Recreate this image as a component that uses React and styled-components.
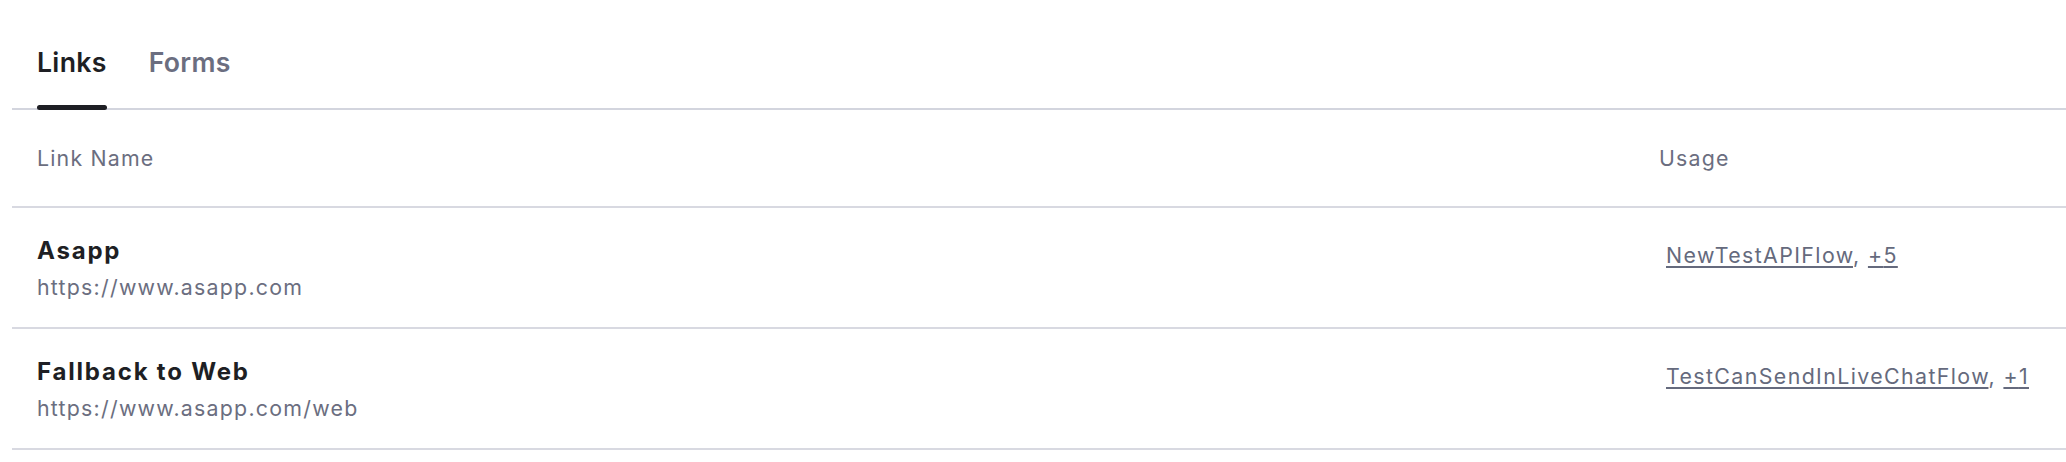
import React, { useState } from "react";
import styled, { createGlobalStyle } from "styled-components";

const GlobalStyle = createGlobalStyle`
  html, body {
    margin: 0;
    padding: 0;
    background: #ffffff;
  }
  body {
    font-family: Inter, "Noto Sans", "Liberation Sans", sans-serif;
    color: #1e1f24;
    -webkit-font-smoothing: antialiased;
  }
`;

const Page = styled.div`
  padding-left: 12px;
`;

const TabBar = styled.div`
  display: flex;
  gap: 42px;
  padding: 42px 25px 0;
  border-bottom: 2px solid #d3d5de;
`;

const Tab = styled.button`
  position: relative;
  padding: 0 0 26px;
  border: 0;
  background: none;
  font-family: inherit;
  font-size: 26.67px;
  line-height: 40px;
  font-weight: 600;
  letter-spacing: 0.3px;
  color: ${(p) => (p.$active ? "#1e1f24" : "#6b6e80")};
  cursor: pointer;

  &::after {
    content: "";
    display: ${(p) => (p.$active ? "block" : "none")};
    position: absolute;
    left: 0;
    right: 0;
    bottom: -2px;
    height: 5.5px;
    border-radius: 3px;
    background: #1e1f24;
  }
`;

const Row = styled.div`
  display: grid;
  grid-template-columns: 1fr 432px;
  border-bottom: 2px solid #d8d9e1;
`;

const HeadCell = styled.div`
  padding: 32px 25px;
  font-size: 21.33px;
  line-height: 32px;
  letter-spacing: 1.2px;
  color: #6b6e80;
`;

const NameCell = styled.div`
  padding: 27px 25px 24px;
  display: flex;
  flex-direction: column;
  gap: 4px;
`;

const Title = styled.div`
  font-size: 24px;
  line-height: 32px;
  font-weight: 700;
  letter-spacing: 1.8px;
  color: #1e1f24;
`;

const Url = styled.div`
  font-size: 21.33px;
  line-height: 32px;
  letter-spacing: 1.25px;
  color: #6b6e80;
`;

const UsageCell = styled.div`
  padding: 31px 25px 0 32px;
  font-size: 21.33px;
  line-height: 32px;
  letter-spacing: 1.4px;
  color: #656a7d;
`;

const FlowLink = styled.a`
  color: inherit;
  text-decoration: underline;
  text-decoration-thickness: 1.5px;
  text-underline-offset: 3px;
  cursor: pointer;
`;

const links = [
  { name: "Asapp", url: "https://www.asapp.com", flow: "NewTestAPIFlow", more: 5 },
  {
    name: "Fallback to Web",
    url: "https://www.asapp.com/web",
    flow: "TestCanSendInLiveChatFlow",
    more: 1,
  },
];

export default function App() {
  const [tab, setTab] = useState("links");
  return (
    <Page>
      <GlobalStyle />
      <TabBar>
        <Tab $active={tab === "links"} onClick={() => setTab("links")}>
          Links
        </Tab>
        <Tab $active={tab === "forms"} onClick={() => setTab("forms")}>
          Forms
        </Tab>
      </TabBar>
      <Row>
        <HeadCell>Link Name</HeadCell>
        <HeadCell>Usage</HeadCell>
      </Row>
      {links.map((link) => (
        <Row key={link.name}>
          <NameCell>
            <Title>{link.name}</Title>
            <Url>{link.url}</Url>
          </NameCell>
          <UsageCell>
            <FlowLink>{link.flow}</FlowLink>, <FlowLink>+{link.more}</FlowLink>
          </UsageCell>
        </Row>
      ))}
    </Page>
  );
}
